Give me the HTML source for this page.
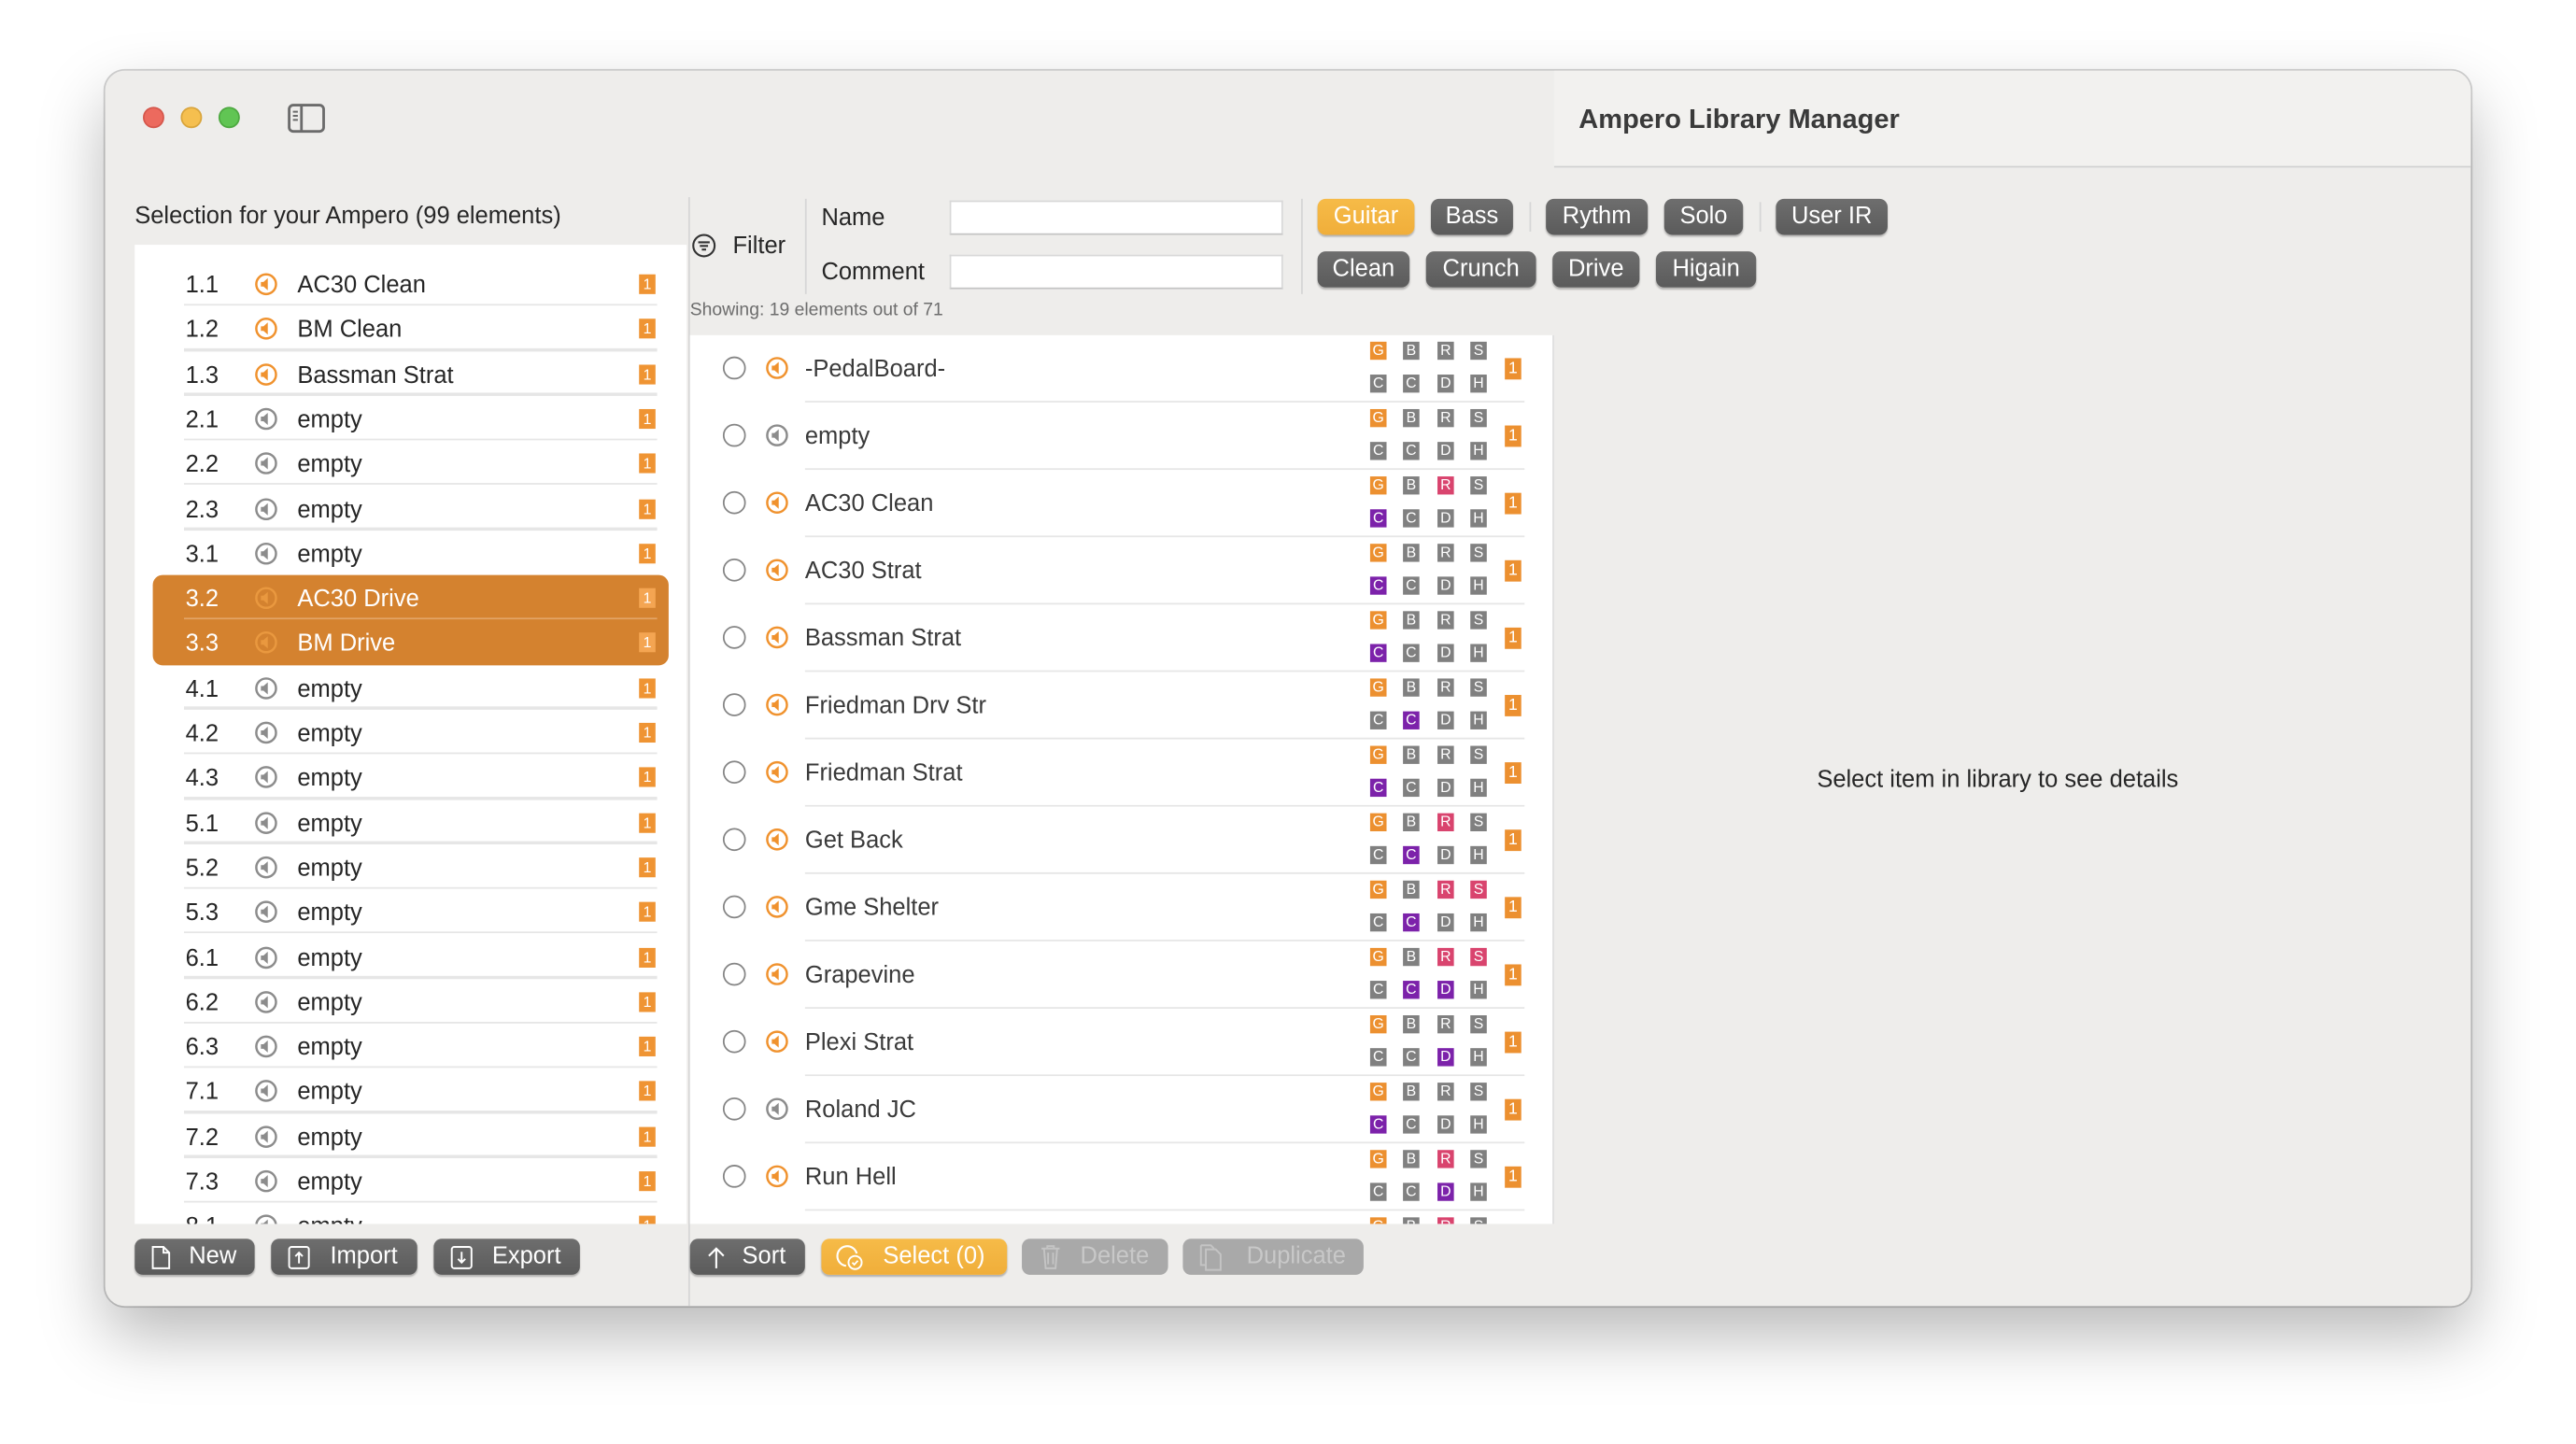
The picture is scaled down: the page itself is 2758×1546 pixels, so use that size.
<!DOCTYPE html>
<html><head><meta charset="utf-8">
<style>
*{margin:0;padding:0;box-sizing:border-box}
html,body{width:2758px;height:1546px;overflow:hidden;background:#fff}
#s{position:absolute;left:0;top:0;width:1568px;height:879px;transform:scale(1.7589);transform-origin:0 0;font-family:"Liberation Sans",sans-serif;color:#262626}
.win{position:absolute;left:64px;top:43px;width:1440px;height:752px;border-radius:12px;background:#eeedeb;box-shadow:0 0 0 1px rgba(0,0,0,.18),0 18px 40px rgba(0,0,0,.28);overflow:hidden}
.a{position:absolute}
.tl{position:absolute;top:22px;width:13px;height:13px;border-radius:50%}
.lst{position:absolute;left:18px;top:106px;width:336px;height:596px;background:#fff;overflow:hidden}
.lr{position:absolute;left:0;width:336px;height:27.3px;font-size:14.5px;line-height:31px}
.lr .n{position:absolute;left:30px;width:22px;text-align:center}
.lr .i{position:absolute;left:73px;top:7px}
.lr .t{position:absolute;left:99px}
.lr .b{position:absolute;left:307px;top:8px;width:10px;height:12px;background:#ef9433;color:#fff;font-size:9px;line-height:12px;text-align:center}
.lr .sep{position:absolute;left:30px;right:18px;bottom:0;height:1.5px;background:#e6e6e6}
.sel{position:absolute;left:11px;top:201px;width:314px;height:55px;border-radius:6px;background:#d4822f}
.lr.w{color:#fff}
.lr.w .b{background:#f4a552}
.mid{position:absolute;left:356px;top:161px;width:526px;height:541px;background:#fff;overflow:hidden;border-right:1px solid #ddd}
.mr{position:absolute;left:0;width:526px;height:41px;font-size:14.5px;color:#3a3a3a}
.mr .r{position:absolute;left:20px;top:13px;width:14px;height:14px;border-radius:50%;border:1.3px solid #858585}
.mr .i{position:absolute;left:46px;top:13px}
.mr .t{position:absolute;left:70px;top:13px}
.mr .sep{position:absolute;left:70px;width:438px;bottom:0;height:1.5px;background:#e6e6e6}
.tg{position:absolute;width:10px;height:11px;color:#fff;font-size:9px;line-height:11px;text-align:center;background:#808080}
.O{background:#ec9030}.P{background:#d9446e}.V{background:#7c22aa}
.one{position:absolute;left:496px;top:14px;width:10px;height:13px;background:#ec9030;color:#fff;font-size:10px;line-height:13px;text-align:center}
.btn{position:absolute;height:22px;border-radius:5px;background:linear-gradient(#6e6e6e,#5b5b5b);color:#fff;font-size:14.5px;line-height:23px;text-align:center;box-shadow:0 1px 1px rgba(0,0,0,.25)}
.og{background:linear-gradient(#f6bb48,#f0ae3a)}
.dis{background:#a9a9a9;color:#c8c8c8;box-shadow:none}
.inp{position:absolute;height:21px;width:203px;background:#fff;border:1px solid #d8d8d8;border-bottom-color:#c4c4c4}
.vl{position:absolute;width:1px;background:#d6d6d6}
</style></head><body><div id="s">
<div class="win">
<div class="a" style="left:882px;top:0;width:558px;height:59px;background:#f2f1ef;border-bottom:1px solid #d2d2d2"></div>
<div class="a" style="left:897px;top:20px;font-size:16.5px;font-weight:bold;color:#3a3a3a;line-height:20px">Ampero Library Manager</div>
<div class="tl" style="left:22.5px;background:#ec6a5e;border:.5px solid #d5574c"></div>
<div class="tl" style="left:45.5px;background:#f5bf4f;border:.5px solid #d9a53c"></div>
<div class="tl" style="left:68.5px;background:#61c554;border:.5px solid #4ea941"></div>
<svg class="a" style="left:111px;top:20px" width="23" height="18" viewBox="0 0 23 18"><rect x="1" y="1" width="21" height="16" rx="2.5" fill="none" stroke="#6b6b6b" stroke-width="1.6"/><line x1="8.5" y1="1" x2="8.5" y2="17" stroke="#6b6b6b" stroke-width="1.6"/><path d="M3.3 5h3M3.3 7.5h3M3.3 10h3" stroke="#6b6b6b" stroke-width="1.1"/></svg>

<div class="a" style="left:18px;top:80px;font-size:14.5px;line-height:18px">Selection for your Ampero (99 elements)</div>
<div class="vl" style="left:355px;top:77px;height:675px"></div>

<div class="lst">
<div class="sel"></div>
<svg width="0" height="0" style="position:absolute"><defs>
<g id="spO"><circle cx="7" cy="7" r="6" fill="none" stroke="#f0922e" stroke-width="1.4"/><path d="M3.8 5.6h1.6l2.6-2.3v7.4l-2.6-2.3H3.8z" fill="#f0922e"/></g>
<g id="spG"><circle cx="7" cy="7" r="6" fill="none" stroke="#8c8c8c" stroke-width="1.4"/><path d="M3.8 5.6h1.6l2.6-2.3v7.4l-2.6-2.3H3.8z" fill="#8c8c8c"/></g>
<g id="spW"><circle cx="7" cy="7" r="6" fill="none" stroke="#e9983f" stroke-width="1.4"/><path d="M3.8 5.6h1.6l2.6-2.3v7.4l-2.6-2.3H3.8z" fill="#e9983f"/></g>
</defs></svg>
<div class="lr" style="top:10px"><span class="n">1.1</span><svg class="i" width="14" height="14"><use href="#spO"/></svg><span class="t">AC30 Clean</span><span class="b">1</span><div class="sep"></div></div>
<div class="lr" style="top:37.3px"><span class="n">1.2</span><svg class="i" width="14" height="14"><use href="#spO"/></svg><span class="t">BM Clean</span><span class="b">1</span><div class="sep"></div></div>
<div class="lr" style="top:64.6px"><span class="n">1.3</span><svg class="i" width="14" height="14"><use href="#spO"/></svg><span class="t">Bassman Strat</span><span class="b">1</span><div class="sep"></div></div>
<div class="lr" style="top:91.9px"><span class="n">2.1</span><svg class="i" width="14" height="14"><use href="#spG"/></svg><span class="t">empty</span><span class="b">1</span><div class="sep"></div></div>
<div class="lr" style="top:119.2px"><span class="n">2.2</span><svg class="i" width="14" height="14"><use href="#spG"/></svg><span class="t">empty</span><span class="b">1</span><div class="sep"></div></div>
<div class="lr" style="top:146.5px"><span class="n">2.3</span><svg class="i" width="14" height="14"><use href="#spG"/></svg><span class="t">empty</span><span class="b">1</span><div class="sep"></div></div>
<div class="lr" style="top:173.8px"><span class="n">3.1</span><svg class="i" width="14" height="14"><use href="#spG"/></svg><span class="t">empty</span><span class="b">1</span></div>
<div class="lr w" style="top:201.1px"><span class="n">3.2</span><svg class="i" width="14" height="14"><use href="#spW"/></svg><span class="t">AC30 Drive</span><span class="b">1</span><div class="sep" style="background:#e3a466"></div></div>
<div class="lr w" style="top:228.4px"><span class="n">3.3</span><svg class="i" width="14" height="14"><use href="#spW"/></svg><span class="t">BM Drive</span><span class="b">1</span></div>
<div class="lr" style="top:255.7px"><span class="n">4.1</span><svg class="i" width="14" height="14"><use href="#spG"/></svg><span class="t">empty</span><span class="b">1</span><div class="sep"></div></div>
<div class="lr" style="top:283px"><span class="n">4.2</span><svg class="i" width="14" height="14"><use href="#spG"/></svg><span class="t">empty</span><span class="b">1</span><div class="sep"></div></div>
<div class="lr" style="top:310.3px"><span class="n">4.3</span><svg class="i" width="14" height="14"><use href="#spG"/></svg><span class="t">empty</span><span class="b">1</span><div class="sep"></div></div>
<div class="lr" style="top:337.6px"><span class="n">5.1</span><svg class="i" width="14" height="14"><use href="#spG"/></svg><span class="t">empty</span><span class="b">1</span><div class="sep"></div></div>
<div class="lr" style="top:364.9px"><span class="n">5.2</span><svg class="i" width="14" height="14"><use href="#spG"/></svg><span class="t">empty</span><span class="b">1</span><div class="sep"></div></div>
<div class="lr" style="top:392.2px"><span class="n">5.3</span><svg class="i" width="14" height="14"><use href="#spG"/></svg><span class="t">empty</span><span class="b">1</span><div class="sep"></div></div>
<div class="lr" style="top:419.5px"><span class="n">6.1</span><svg class="i" width="14" height="14"><use href="#spG"/></svg><span class="t">empty</span><span class="b">1</span><div class="sep"></div></div>
<div class="lr" style="top:446.8px"><span class="n">6.2</span><svg class="i" width="14" height="14"><use href="#spG"/></svg><span class="t">empty</span><span class="b">1</span><div class="sep"></div></div>
<div class="lr" style="top:474.1px"><span class="n">6.3</span><svg class="i" width="14" height="14"><use href="#spG"/></svg><span class="t">empty</span><span class="b">1</span><div class="sep"></div></div>
<div class="lr" style="top:501.4px"><span class="n">7.1</span><svg class="i" width="14" height="14"><use href="#spG"/></svg><span class="t">empty</span><span class="b">1</span><div class="sep"></div></div>
<div class="lr" style="top:528.7px"><span class="n">7.2</span><svg class="i" width="14" height="14"><use href="#spG"/></svg><span class="t">empty</span><span class="b">1</span><div class="sep"></div></div>
<div class="lr" style="top:556px"><span class="n">7.3</span><svg class="i" width="14" height="14"><use href="#spG"/></svg><span class="t">empty</span><span class="b">1</span><div class="sep"></div></div>
<div class="lr" style="top:583.3px"><span class="n">8.1</span><svg class="i" width="14" height="14"><use href="#spG"/></svg><span class="t">empty</span><span class="b">1</span></div>
</div>

<!-- filter -->
<svg class="a" style="left:357px;top:99px" width="15" height="15" viewBox="0 0 15 15"><circle cx="7.5" cy="7.5" r="6.5" fill="none" stroke="#333" stroke-width="1.2"/><path d="M4 5.5h7M5 7.7h5M6.2 9.9h2.6" stroke="#333" stroke-width="1.2"/></svg>
<div class="a" style="left:382px;top:99px;font-size:14.5px">Filter</div>
<div class="vl" style="left:426px;top:78px;height:58px"></div>
<div class="a" style="left:436px;top:82px;font-size:14.5px">Name</div>
<div class="a" style="left:436px;top:115px;font-size:14.5px">Comment</div>
<div class="inp" style="left:514px;top:79px"></div>
<div class="inp" style="left:514px;top:112px"></div>
<div class="vl" style="left:728px;top:78px;height:58px"></div>
<div class="btn og" style="left:738px;top:78px;width:59px">Guitar</div>
<div class="btn" style="left:807px;top:78px;width:50px">Bass</div>
<div class="vl" style="left:867px;top:80px;height:18px"></div>
<div class="btn" style="left:877px;top:78px;width:62px">Rythm</div>
<div class="btn" style="left:949px;top:78px;width:48px">Solo</div>
<div class="vl" style="left:1007px;top:80px;height:18px"></div>
<div class="btn" style="left:1017px;top:78px;width:68px">User IR</div>
<div class="btn" style="left:738px;top:110px;width:56px">Clean</div>
<div class="btn" style="left:804px;top:110px;width:67px">Crunch</div>
<div class="btn" style="left:881px;top:110px;width:53px">Drive</div>
<div class="btn" style="left:944px;top:110px;width:61px">Higain</div>
<div class="a" style="left:356px;top:140px;font-size:11px;color:#6d6d6d">Showing: 19 elements out of 71</div>

<div class="mid">
<div class="mr" style="top:0"><div class="r"></div><svg class="i" width="14" height="14"><use href="#spO"/></svg><span class="t">-PedalBoard-</span><span class="tg O" style="left:414px;top:4px">G</span><span class="tg" style="left:434px;top:4px">B</span><span class="tg" style="left:455px;top:4px">R</span><span class="tg" style="left:475px;top:4px">S</span><span class="tg" style="left:414px;top:24px">C</span><span class="tg" style="left:434px;top:24px">C</span><span class="tg" style="left:455px;top:24px">D</span><span class="tg" style="left:475px;top:24px">H</span><span class="one">1</span><div class="sep"></div></div>
<div class="mr" style="top:41px"><div class="r"></div><svg class="i" width="14" height="14"><use href="#spG"/></svg><span class="t">empty</span><span class="tg O" style="left:414px;top:4px">G</span><span class="tg" style="left:434px;top:4px">B</span><span class="tg" style="left:455px;top:4px">R</span><span class="tg" style="left:475px;top:4px">S</span><span class="tg" style="left:414px;top:24px">C</span><span class="tg" style="left:434px;top:24px">C</span><span class="tg" style="left:455px;top:24px">D</span><span class="tg" style="left:475px;top:24px">H</span><span class="one">1</span><div class="sep"></div></div>
<div class="mr" style="top:82px"><div class="r"></div><svg class="i" width="14" height="14"><use href="#spO"/></svg><span class="t">AC30 Clean</span><span class="tg O" style="left:414px;top:4px">G</span><span class="tg" style="left:434px;top:4px">B</span><span class="tg P" style="left:455px;top:4px">R</span><span class="tg" style="left:475px;top:4px">S</span><span class="tg V" style="left:414px;top:24px">C</span><span class="tg" style="left:434px;top:24px">C</span><span class="tg" style="left:455px;top:24px">D</span><span class="tg" style="left:475px;top:24px">H</span><span class="one">1</span><div class="sep"></div></div>
<div class="mr" style="top:123px"><div class="r"></div><svg class="i" width="14" height="14"><use href="#spO"/></svg><span class="t">AC30 Strat</span><span class="tg O" style="left:414px;top:4px">G</span><span class="tg" style="left:434px;top:4px">B</span><span class="tg" style="left:455px;top:4px">R</span><span class="tg" style="left:475px;top:4px">S</span><span class="tg V" style="left:414px;top:24px">C</span><span class="tg" style="left:434px;top:24px">C</span><span class="tg" style="left:455px;top:24px">D</span><span class="tg" style="left:475px;top:24px">H</span><span class="one">1</span><div class="sep"></div></div>
<div class="mr" style="top:164px"><div class="r"></div><svg class="i" width="14" height="14"><use href="#spO"/></svg><span class="t">Bassman Strat</span><span class="tg O" style="left:414px;top:4px">G</span><span class="tg" style="left:434px;top:4px">B</span><span class="tg" style="left:455px;top:4px">R</span><span class="tg" style="left:475px;top:4px">S</span><span class="tg V" style="left:414px;top:24px">C</span><span class="tg" style="left:434px;top:24px">C</span><span class="tg" style="left:455px;top:24px">D</span><span class="tg" style="left:475px;top:24px">H</span><span class="one">1</span><div class="sep"></div></div>
<div class="mr" style="top:205px"><div class="r"></div><svg class="i" width="14" height="14"><use href="#spO"/></svg><span class="t">Friedman Drv Str</span><span class="tg O" style="left:414px;top:4px">G</span><span class="tg" style="left:434px;top:4px">B</span><span class="tg" style="left:455px;top:4px">R</span><span class="tg" style="left:475px;top:4px">S</span><span class="tg" style="left:414px;top:24px">C</span><span class="tg V" style="left:434px;top:24px">C</span><span class="tg" style="left:455px;top:24px">D</span><span class="tg" style="left:475px;top:24px">H</span><span class="one">1</span><div class="sep"></div></div>
<div class="mr" style="top:246px"><div class="r"></div><svg class="i" width="14" height="14"><use href="#spO"/></svg><span class="t">Friedman Strat</span><span class="tg O" style="left:414px;top:4px">G</span><span class="tg" style="left:434px;top:4px">B</span><span class="tg" style="left:455px;top:4px">R</span><span class="tg" style="left:475px;top:4px">S</span><span class="tg V" style="left:414px;top:24px">C</span><span class="tg" style="left:434px;top:24px">C</span><span class="tg" style="left:455px;top:24px">D</span><span class="tg" style="left:475px;top:24px">H</span><span class="one">1</span><div class="sep"></div></div>
<div class="mr" style="top:287px"><div class="r"></div><svg class="i" width="14" height="14"><use href="#spO"/></svg><span class="t">Get Back</span><span class="tg O" style="left:414px;top:4px">G</span><span class="tg" style="left:434px;top:4px">B</span><span class="tg P" style="left:455px;top:4px">R</span><span class="tg" style="left:475px;top:4px">S</span><span class="tg" style="left:414px;top:24px">C</span><span class="tg V" style="left:434px;top:24px">C</span><span class="tg" style="left:455px;top:24px">D</span><span class="tg" style="left:475px;top:24px">H</span><span class="one">1</span><div class="sep"></div></div>
<div class="mr" style="top:328px"><div class="r"></div><svg class="i" width="14" height="14"><use href="#spO"/></svg><span class="t">Gme Shelter</span><span class="tg O" style="left:414px;top:4px">G</span><span class="tg" style="left:434px;top:4px">B</span><span class="tg P" style="left:455px;top:4px">R</span><span class="tg P" style="left:475px;top:4px">S</span><span class="tg" style="left:414px;top:24px">C</span><span class="tg V" style="left:434px;top:24px">C</span><span class="tg" style="left:455px;top:24px">D</span><span class="tg" style="left:475px;top:24px">H</span><span class="one">1</span><div class="sep"></div></div>
<div class="mr" style="top:369px"><div class="r"></div><svg class="i" width="14" height="14"><use href="#spO"/></svg><span class="t">Grapevine</span><span class="tg O" style="left:414px;top:4px">G</span><span class="tg" style="left:434px;top:4px">B</span><span class="tg P" style="left:455px;top:4px">R</span><span class="tg P" style="left:475px;top:4px">S</span><span class="tg" style="left:414px;top:24px">C</span><span class="tg V" style="left:434px;top:24px">C</span><span class="tg V" style="left:455px;top:24px">D</span><span class="tg" style="left:475px;top:24px">H</span><span class="one">1</span><div class="sep"></div></div>
<div class="mr" style="top:410px"><div class="r"></div><svg class="i" width="14" height="14"><use href="#spO"/></svg><span class="t">Plexi Strat</span><span class="tg O" style="left:414px;top:4px">G</span><span class="tg" style="left:434px;top:4px">B</span><span class="tg" style="left:455px;top:4px">R</span><span class="tg" style="left:475px;top:4px">S</span><span class="tg" style="left:414px;top:24px">C</span><span class="tg" style="left:434px;top:24px">C</span><span class="tg V" style="left:455px;top:24px">D</span><span class="tg" style="left:475px;top:24px">H</span><span class="one">1</span><div class="sep"></div></div>
<div class="mr" style="top:451px"><div class="r"></div><svg class="i" width="14" height="14"><use href="#spG"/></svg><span class="t">Roland JC</span><span class="tg O" style="left:414px;top:4px">G</span><span class="tg" style="left:434px;top:4px">B</span><span class="tg" style="left:455px;top:4px">R</span><span class="tg" style="left:475px;top:4px">S</span><span class="tg V" style="left:414px;top:24px">C</span><span class="tg" style="left:434px;top:24px">C</span><span class="tg" style="left:455px;top:24px">D</span><span class="tg" style="left:475px;top:24px">H</span><span class="one">1</span><div class="sep"></div></div>
<div class="mr" style="top:492px"><div class="r"></div><svg class="i" width="14" height="14"><use href="#spO"/></svg><span class="t">Run Hell</span><span class="tg O" style="left:414px;top:4px">G</span><span class="tg" style="left:434px;top:4px">B</span><span class="tg P" style="left:455px;top:4px">R</span><span class="tg" style="left:475px;top:4px">S</span><span class="tg" style="left:414px;top:24px">C</span><span class="tg" style="left:434px;top:24px">C</span><span class="tg V" style="left:455px;top:24px">D</span><span class="tg" style="left:475px;top:24px">H</span><span class="one">1</span><div class="sep"></div></div>
<div class="mr" style="top:533px"><span class="tg O" style="left:414px;top:4px">G</span><span class="tg" style="left:434px;top:4px">B</span><span class="tg P" style="left:455px;top:4px">R</span><span class="tg" style="left:475px;top:4px">S</span></div>
</div>

<div class="a" style="left:882px;top:424px;width:540px;text-align:center;font-size:14.5px">Select item in library to see details</div>

<!-- bottom buttons -->
<div class="btn" style="left:18px;top:711px;width:73px;padding-left:22px"><svg class="a" style="left:10px;top:4px" width="12" height="15"><path d="M1 1h6.5l3.5 3.5V14H1z M7.5 1v3.5H11" fill="none" stroke="#fff" stroke-width="1.1"/></svg>New</div>
<div class="btn" style="left:101px;top:711px;width:89px;padding-left:24px"><svg class="a" style="left:10px;top:4px" width="14" height="15"><rect x="1" y="1" width="12" height="13" rx="1.5" fill="none" stroke="#fff" stroke-width="1.1"/><path d="M7 11V4.5M4.8 6.7L7 4.5l2.2 2.2" fill="none" stroke="#fff" stroke-width="1.1"/></svg>Import</div>
<div class="btn" style="left:200px;top:711px;width:89px;padding-left:24px"><svg class="a" style="left:10px;top:4px" width="14" height="15"><rect x="1" y="1" width="12" height="13" rx="1.5" fill="none" stroke="#fff" stroke-width="1.1"/><path d="M7 4v6.5M4.8 8.3L7 10.5l2.2-2.2" fill="none" stroke="#fff" stroke-width="1.1"/></svg>Export</div>
<div class="btn" style="left:356px;top:711px;width:70px;padding-left:20px"><svg class="a" style="left:10px;top:4px" width="12" height="15"><path d="M6 14V2M1.5 6.5L6 2l4.5 4.5" fill="none" stroke="#fff" stroke-width="1.2"/></svg>Sort</div>
<div class="btn og" style="left:436px;top:711px;width:113px;padding-left:24px"><svg class="a" style="left:9px;top:3px" width="17" height="17"><path d="M12.5 6A6 6 0 1 0 6 13.5" fill="none" stroke="#fff" stroke-width="1.2"/><circle cx="11.5" cy="11.5" r="4" fill="none" stroke="#fff" stroke-width="1.1"/><path d="M9.8 11.5l1.2 1.3 2.2-2.4" fill="none" stroke="#fff" stroke-width="1"/></svg>Select (0)</div>
<div class="btn dis" style="left:558px;top:711px;width:89px;padding-left:24px"><svg class="a" style="left:11px;top:3px" width="13" height="16"><path d="M1 3h11M4.5 3V1.5h4V3M2.5 3l1 12h6l1-12M5 5.5v7M8 5.5v7" fill="none" stroke="#c4c4c4" stroke-width="1.1"/></svg>Delete</div>
<div class="btn dis" style="left:656px;top:711px;width:110px;padding-left:28px"><svg class="a" style="left:10px;top:3px" width="16" height="17"><path d="M4 3.5h6l3 3V16H4z M1 1h6l2 2" fill="none" stroke="#c4c4c4" stroke-width="1.1"/><path d="M1 1v12h3" fill="none" stroke="#c4c4c4" stroke-width="1.1"/></svg>Duplicate</div>
</div>
</div></body></html>
